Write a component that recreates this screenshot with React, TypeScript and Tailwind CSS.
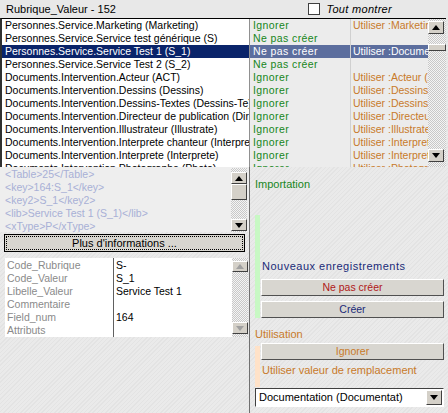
import React from "react";

const rows: [string, string, string][] = [
  ["Personnes.Service.Marketing (Marketing)", "Ignorer", "Utiliser :Marketing"],
  ["Personnes.Service.Service test générique (S)", "Ne pas créer", ""],
  ["Personnes.Service.Service Test 1 (S_1)", "Ne pas créer", "Utiliser :Documentation"],
  ["Personnes.Service.Service Test 2 (S_2)", "Ne pas créer", ""],
  ["Documents.Intervention.Acteur (ACT)", "Ignorer", "Utiliser :Acteur (ACT)"],
  ["Documents.Intervention.Dessins (Dessins)", "Ignorer", "Utiliser :Dessins"],
  ["Documents.Intervention.Dessins-Textes (Dessins-Te)", "Ignorer", "Utiliser :Dessins-Textes"],
  ["Documents.Intervention.Directeur de publication (Directeur)", "Ignorer", "Utiliser :Directeur"],
  ["Documents.Intervention.Illustrateur (Illustrate)", "Ignorer", "Utiliser :Illustrateur"],
  ["Documents.Intervention.Interprete chanteur (Interprete)", "Ignorer", "Utiliser :Interprete"],
  ["Documents.Intervention.Interprete (Interprete)", "Ignorer", "Utiliser :Interprete"],
  ["Documents.Intervention.Photographe (Photo)", "Ignorer", "Utiliser :Photographe"],
];

const xml = ["<Table>25</Table>", "<key>164:S_1</key>", "<key2>S_1</key2>", "<lib>Service Test 1 (S_1)</lib>", "<xType>P</xType>"];

const props: [string, string][] = [
  ["Code_Rubrique", "S-"],
  ["Code_Valeur", "S_1"],
  ["Libelle_Valeur", "Service Test 1"],
  ["Commentaire", ""],
  ["Field_num", "164"],
  ["Attributs", ""],
];

function Arrow({ up, dim }: { up?: boolean; dim?: boolean }) {
  return (
    <svg width="8" height="5" viewBox="0 0 8 5">
      <path d={up ? "M0 5 L4 0 L8 5 Z" : "M0 0 L4 5 L8 0 Z"} fill={dim ? "#a0a0a0" : "#000"} />
    </svg>
  );
}

function SBtn({ up, dim, h = "h-[13px]" }: { up?: boolean; dim?: boolean; h?: string }) {
  return (
    <div className={`w-[16px] ${h} flex items-center justify-center bg-[#d4d0c8] border border-t-white border-l-white border-r-[#404040] border-b-[#404040]`}>
      <Arrow up={up} dim={dim} />
    </div>
  );
}

const checker =
  "bg-[repeating-conic-gradient(#c8c8c8_0%_25%,#f4f4f4_0%_50%)] bg-[length:2px_2px]";

function Button({ label, color }: { label: string; color: string }) {
  return (
    <div className={`h-[17px] flex items-center justify-center bg-[#d8d6d0] border border-t-white border-l-white border-r-[#505050] border-b-[#505050] ${color}`}>
      {label}
    </div>
  );
}

export default function App() {
  return (
    <div
      className="w-[448px] h-[413px] overflow-hidden bg-[repeating-linear-gradient(135deg,#e3e3e3_0px,#e3e3e3_1px,#eaeaea_1px,#eaeaea_3px)] text-[10.5px] leading-[13px] text-black flex flex-col"
      style={{ fontFamily: "'Liberation Sans', Arial, sans-serif" }}
    >
      {/* Header */}
      <div className="h-[18px] flex items-center pl-[6px] pr-[4px] bg-[#e8e8e8] shrink-0">
        <span className="text-[11px]">Rubrique_Valeur - 152</span>
        <div className="ml-auto mr-[52px] flex items-center gap-[6px]">
          <div className="w-[12px] h-[12px] bg-white border border-[#404040]" />
          <span className="italic text-[11px] tracking-[0.3px]">Tout montrer</span>
        </div>
      </div>

      {/* List */}
      <div className="h-[149px] flex shrink-0 border-t border-t-black border-l-2 border-l-[#303030] mr-[2px] overflow-hidden">
        <div className="flex-1 flex flex-col overflow-hidden">
          {rows.map((r, i) => {
            const sel = i === 2;
            return (
              <div key={i} className="h-[13px] flex shrink-0 whitespace-nowrap">
                <div className={`w-[248px] pl-[3px] overflow-hidden border-r border-r-[#909090] ${sel ? "bg-[#0a246a] text-white" : "bg-white"}`}>{r[0]}</div>
                <div className={`w-[101px] pl-[3px] overflow-hidden border-r border-r-[#d0d0d0] tracking-[0.4px] ${sel ? "bg-[#5c6e9e] text-white" : "bg-[#ececec] text-[#16861a]"}`}>{r[1]}</div>
                <div className={`flex-1 pl-[2px] overflow-hidden ${sel ? "bg-[#5c6e9e] text-white" : "bg-[#ececec] text-[#c87a2a]"}`}>{r[2]}</div>
              </div>
            );
          })}
        </div>
        <div className={`w-[18px] shrink-0 flex flex-col items-start pt-[2px] pb-[5px] ${checker}`}>
          <SBtn up h="h-[13px]" />
          <div className="h-[10px]" />
          <div className="w-[18px] h-[7px] bg-[#d4d0c8] border border-t-white border-l-white border-r-[#404040] border-b-[#404040]" />
          <div className="flex-1" />
          <SBtn h="h-[13px]" />
        </div>
      </div>

      {/* Bottom area */}
      <div className="flex-1 flex min-h-0">
        {/* Left */}
        <div className="w-[250px] shrink-0 flex flex-col border-r border-r-[#707070]">
          <div className="h-[65px] flex bg-[#eeeeee] pl-[5px] pr-[2px] pt-[1px]">
            <div className="flex-1 text-[#a8b0d6] overflow-hidden whitespace-nowrap">
              {xml.map((l, i) => (
                <div key={i} className="h-[13px]">{l}</div>
              ))}
            </div>
            <div className={`w-[16px] flex flex-col pt-[4px] pb-[1px] ${checker}`}>
              <SBtn up h="h-[12px]" />
              <div className="w-[16px] h-[16px] bg-[#d4d0c8] border border-t-white border-l-white border-r-[#404040] border-b-[#404040]" />
              <div className="flex-1" />
              <SBtn h="h-[12px]" />
            </div>
          </div>
          <div className="mx-[4px] mt-[2px] h-[18px] border border-black bg-[#d8d6d0] p-[1px]">
            <div className="h-full border border-dotted border-black flex items-center justify-center text-[11px]">
              Plus d'informations ...
            </div>
          </div>
          <div className="mt-[6px] ml-[5px] mr-[1px] h-[79px] flex bg-white">
            <div className="w-[109px] border-r border-r-[#606060] pt-[1px] text-[#8a8a8a] overflow-hidden">
              {props.map((p, i) => (
                <div key={i} className="h-[13px] pl-[2px]">{p[0]}</div>
              ))}
            </div>
            <div className="flex-1 pt-[1px] pl-[2px] overflow-hidden">
              {props.map((p, i) => (
                <div key={i} className="h-[13px]">{p[1]}</div>
              ))}
            </div>
            <div className={`w-[16px] flex flex-col py-[3px] ${checker}`}>
              <SBtn up dim h="h-[11px]" />
              <div className="flex-1" />
              <SBtn dim h="h-[12px]" />
            </div>
          </div>
        </div>

        {/* Right */}
        <div className="flex-1 flex flex-col pl-[5px] pr-[4px] pt-[11px]">
          <div className="text-[#18861c] text-[11px] h-[13px]">Importation</div>
          <div className="mt-[24px] flex">
            <div className="w-[5px] bg-[#c8f8c4]" />
            <div className="flex-1 flex flex-col pl-[2px] pt-[45px]">
              <div className="text-[#1a2a78] text-[11px] h-[13px] tracking-[0.5px]">Nouveaux enregistrements</div>
              <div className="mt-[6px] -ml-[1px]"><Button label="Ne pas créer" color="text-[#b01818]" /></div>
              <div className="mt-[5px] -ml-[1px]"><Button label="Créer" color="text-[#1a2a78]" /></div>
            </div>
          </div>
          <div className="mt-[10px] text-[#c87a2a] text-[11px] h-[13px]">Utilisation</div>
          <div className="mt-[2px] flex">
            <div className="w-[5px] bg-[#ffe2c8] mt-[3px]" />
            <div className="flex-1 flex flex-col pl-[2px]">
              <div className="-ml-[1px]"><Button label="Ignorer" color="text-[#c87a2a]" /></div>
              <div className="mt-[4px] h-[13px] text-[#c87a2a] text-[11px]">Utiliser valeur de remplacement</div>
              <div className="h-[10px]" />
            </div>
          </div>
          <div className="mt-[1px] h-[19px] flex items-center bg-white border border-t-[#404040] border-l-[#404040] border-r-white border-b-white">
            <span className="flex-1 pl-[3px] text-[11px]">Documentation (Documentat)</span>
            <div className="w-[16px] h-[15px] mr-[1px] flex items-center justify-center bg-[#d4d0c8] border border-t-white border-l-white border-r-[#404040] border-b-[#404040]">
              <Arrow />
            </div>
          </div>
        </div>
      </div>
    </div>
  );
}
